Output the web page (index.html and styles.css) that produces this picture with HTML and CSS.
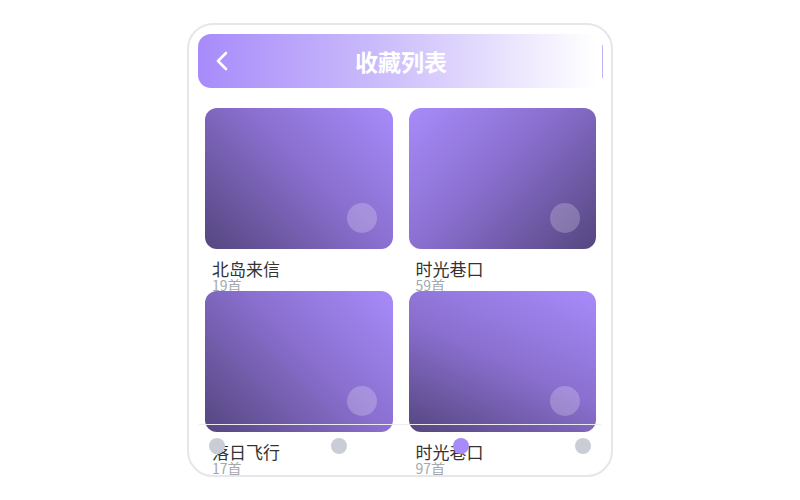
FILE: index.html
```html
<!DOCTYPE html>
<html lang="zh-CN">
<head>
    <meta charset="UTF-8">
    <meta name="viewport" content="width=device-width, initial-scale=1.0">
    <title>收藏列表</title>
    <link rel="stylesheet" href="styles.css">
</head>
<body>
    <div class="phone">
        <div class="header">
            <button class="back" aria-label="返回">
                <svg width="20" height="20" viewBox="0 0 20 20">
                    <polyline points="14,2 6,10 14,18" fill="none" stroke="#fff" stroke-width="2.6" stroke-linecap="round" stroke-linejoin="round"/>
                </svg>
            </button>
            <h1>收藏列表</h1>
            <span class="edge"></span>
        </div>

        <div class="grid">
            <div class="item">
                <div class="cover cover-a"><span class="play"></span></div>
                <div class="name">北岛来信</div>
                <div class="count">19首</div>
            </div>
            <div class="item">
                <div class="cover cover-b"><span class="play"></span></div>
                <div class="name">时光巷口</div>
                <div class="count">59首</div>
            </div>
            <div class="item">
                <div class="cover cover-a"><span class="play"></span></div>
                <div class="name">落日飞行</div>
                <div class="count">17首</div>
            </div>
            <div class="item">
                <div class="cover cover-c"><span class="play"></span></div>
                <div class="name">时光巷口</div>
                <div class="count">97首</div>
            </div>
        </div>

        <div class="tabbar">
            <span class="dot"></span>
            <span class="dot"></span>
            <span class="dot active"></span>
            <span class="dot"></span>
        </div>
    </div>
</body>
</html>
```

FILE: styles.css
```css
body {
    margin: 0;
    background: #fff;
    font-family: "Noto Sans CJK SC", "Noto Sans", sans-serif;
}
.phone {
    position: relative;
    box-sizing: border-box;
    width: 426px;
    height: 454px;
    margin: 23px 0 0 187px;
    padding: 9px 7px 9px 9px;
    border: 2px solid #e6e6eb;
    border-radius: 26px;
    overflow: hidden;
    background: #fff;
}
.header {
    display: grid;
    grid-template-columns: 48px 1fr 48px;
    align-items: center;
    height: 54px;
    border-radius: 13px;
    background: linear-gradient(90deg, #a78bfa 0%, #cbbcfb 45%, #fff 98%);
}
.back {
    display: flex;
    align-items: center;
    justify-content: center;
    width: 48px;
    height: 54px;
    padding: 0;
    border: none;
    background: none;
}
.header h1 {
    margin: 0;
    text-align: center;
    color: #fff;
    font-size: 23px;
    font-weight: bold;
    line-height: 54px;
}
.edge {
    justify-self: end;
    width: 1px;
    height: 33px;
    margin-right: 1px;
    background: #c3b3fb;
}
.grid {
    display: grid;
    grid-template-columns: 1fr 1fr;
    grid-auto-rows: 175px;
    gap: 8px 16px;
    margin-top: 20px;
    padding: 0 8px 0 7px;
}
.item {
    min-width: 0;
}
.cover {
    position: relative;
    height: 141px;
    border-radius: 12px;
}
.cover-a {
    background: linear-gradient(45deg, #55467f, #8a6fcf 55%, #a78bfa);
}
.cover-b {
    background: linear-gradient(135deg, #a78bfa, #8a6fcf 45%, #55467f);
}
.cover-c {
    background: linear-gradient(25deg, #55467f, #8a6fcf 50%, #a78bfa);
}
.play {
    position: absolute;
    right: 16px;
    bottom: 16px;
    width: 30px;
    height: 30px;
    border-radius: 50%;
    background: rgba(255, 255, 255, 0.22);
}
.name {
    padding: 11px 0 0 7px;
    font-size: 17px;
    line-height: 18px;
    color: #333;
}
.count {
    padding-left: 7px;
    font-size: 14px;
    line-height: 15px;
    color: #a4a8ae;
}
.tabbar {
    position: absolute;
    left: 10px;
    right: 10px;
    bottom: 8px;
    display: flex;
    justify-content: space-between;
    align-items: center;
    height: 42px;
    padding: 0 10px;
    border-top: 1px solid #ebebf0;
}
.dot {
    width: 16px;
    height: 16px;
    border-radius: 50%;
    background: #c9ced6;
}
.dot.active {
    background: #a78bfa;
}
```
